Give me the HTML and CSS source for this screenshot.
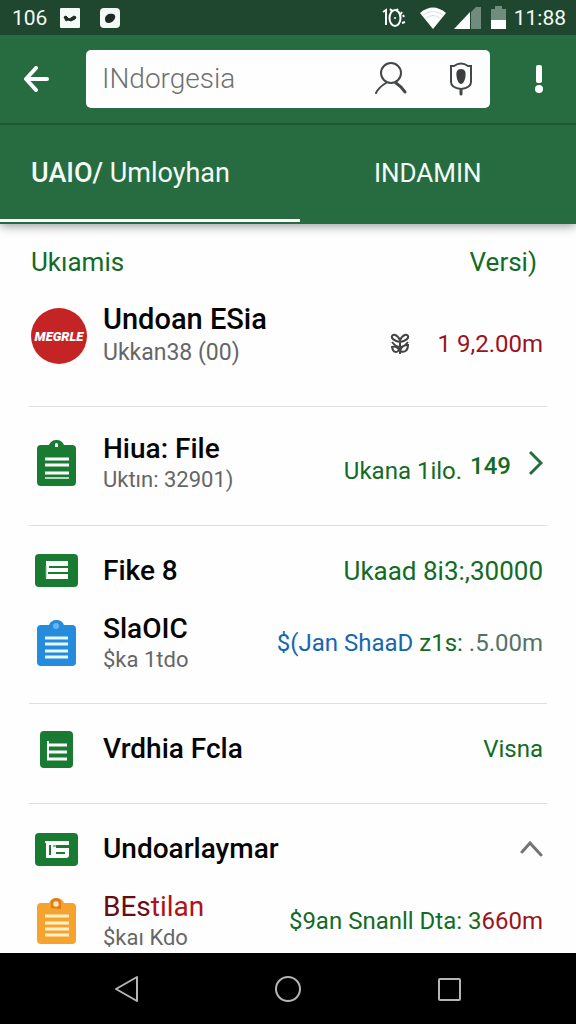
FILE: index.html
```html
<!DOCTYPE html>
<html lang="id">
<head>
<meta charset="utf-8">
<meta name="viewport" content="width=device-width, initial-scale=1">
<title>INdorgesia</title>
<link rel="stylesheet" href="styles.css">
</head>
<body>
<svg class="defs" aria-hidden="true">
  <symbol id="clipboard" viewBox="0 0 56 56">
    <path fill="currentColor" d="M10 10h8c1-3 3.500-5 7.500-5s6.500 2 7.500 5h8a4 4 0 0 1 4 4v33a4 4 0 0 1-4 4H10a4 4 0 0 1-4-4V14a4 4 0 0 1 4-4z"/>
  </symbol>
</svg>

<header class="header">
  <div class="status">
    <span>106</span>
    <svg class="status-app" width="22" height="22" viewBox="0 0 22 22"><rect x="1" y="1" width="20" height="20" rx="1" fill="#f4faf6"/><path d="M5 10l2-1 3 3 2-1 3-2 2 1-1 2-4 2-3-1-2 1z" fill="#1c2b23" stroke="#1c2b23"/></svg>
    <svg width="22" height="22" viewBox="0 0 22 22"><rect x="1" y="1" width="20" height="20" rx="4" fill="#f4faf6"/><path d="M6 12c0-4 4-6 8-5 4 1 2 6-1 8-4 2-7 1-7-3z" fill="#1c2b23"/></svg>
    <svg class="status-alarm" width="26" height="24" viewBox="0 0 26 24" fill="none" stroke="#fff" stroke-width="2"><path d="M1 6l3-2v15M20 6l-2 3M21 9l1 2M20 17l3-1M8 3l2 2M16 3l-2 2"/><ellipse cx="13" cy="12" rx="5.500" ry="8"/><circle cx="13" cy="12" r="1" fill="#fff" stroke="none"/></svg>
    <svg class="status-wifi" width="26" height="22" viewBox="0 0 26 22"><path d="M0 6Q13-5 26 6L13 22z" fill="#fff"/><path d="M3 8q10-7 20 0M6 11q7-5 14 0" fill="none" stroke="#d6e3db"/></svg>
    <svg class="status-signal" width="27" height="23" viewBox="0 0 27 23"><path d="M17 6l5-5h5v22H17z" fill="#6f8d7c"/><path d="M0 23L16 6v17z" fill="#fff"/></svg>
    <svg class="status-battery" width="15" height="23" viewBox="0 0 15 23"><path d="M0 3h4V0h7v3h4v12H0z" fill="#6f8d7c"/><path d="M0 14h15v9H0z" fill="#fff"/></svg>
    <span>11:88</span>
  </div>

  <div class="toolbar">
    <button class="tool" type="button" aria-label="Back">
      <svg width="26" height="26" viewBox="0 0 26 26" fill="none" stroke="#fff" stroke-width="4" stroke-linecap="round" stroke-linejoin="round"><path d="M12 2L2 13l10 11M3 13h20"/></svg>
    </button>
    <div class="search">
      <input class="search-input" type="text" placeholder="INdorgesia" aria-label="Search">
      <button class="search-button" type="button" aria-label="Account">
        <svg width="34" height="34" viewBox="0 0 34 34" fill="none" stroke="#444748" stroke-width="2" stroke-linecap="round"><circle cx="17" cy="11" r="10"/><path d="M2 31q3-6 10-10"/><path d="M22 21q6 4 9 9" stroke-width="3"/></svg>
      </button>
      <button class="search-button" type="button" aria-label="Voice search">
        <svg width="26" height="34" viewBox="0 0 26 34" fill="none" stroke="#444748" stroke-width="2" stroke-linecap="round"><path d="M3 4h3q7-5 14 0h3v16q0 6-10 7-10-1-10-7z"/><path d="M13 7c4 0 5 3 4.500 7s-2 8-4.500 8-4-4-4.500-8S9 7 13 7z" fill="#3c3f40" stroke="none"/><path d="M13 28v4" stroke-width="3"/></svg>
      </button>
    </div>
    <button class="tool" type="button" aria-label="Menu">
      <svg width="8" height="28" viewBox="0 0 8 28" fill="#fff"><rect x="1" width="6" height="18" rx="2"/><circle cx="4" cy="24" r="4"/></svg>
    </button>
  </div>

  <nav class="tabs">
    <a class="tab tab-active" href="#first"><span class="tab-strong">UAIO/</span> Umloyhan</a>
    <a class="tab" href="#second">INDAMIN</a>
  </nav>
</header>

<main class="list" id="first">
  <section class="group group-first">
    <div class="subheader"><span>Ukıamis</span><span>Versi)</span></div>
    <div class="row row-tall">
      <span class="logo">MEGRLE</span>
      <div class="label label-large"><h2 class="title">Undoan ESia</h2><p class="note">Ukkan38 (00)</p></div>
      <svg class="sprout low" width="20" height="38" viewBox="0 0 20 22" fill="none" stroke="#444" stroke-width="2"><path d="M10 9C4 8 1 5 2 3s5-2 8 4c3-6 7-6 8-4s-2 5-8 6zM2 9q4 5 8 5t8-5M10 9v12M2 14c3-1 6 0 7 3-2 3-6 3-7-3zM18 12c-4 0-7 2-8 6 4 2 8 0 8-6z"/></svg>
      <span class="value low red">1 9,2.00m</span>
    </div>
  </section>

  <section class="group group-single">
    <div class="row row-tall">
      <svg class="icon green-icon" viewBox="0 0 56 56"><use href="#clipboard"/><path d="M24 12V9q1-2 3 0v3z" fill="#fff"/><path d="M14 24h24M14 30h24M14 38h24" stroke="#fff" stroke-width="3"/><path d="M14 43h24" stroke="#b9d8c0" stroke-width="2"/></svg>
      <div class="label"><h2 class="title">Hiua: File</h2><p class="note">Uktın: 32901)</p></div>
      <span class="value low">Ukana 1ilo.</span>
      <span class="value medium">149</span>
      <button class="chevron chevron-next" type="button" aria-label="Open">
        <svg width="14" height="26" viewBox="0 0 14 26" fill="none" stroke="#296b41" stroke-width="3"><path d="M1 2l11 11L1 24"/></svg>
      </button>
    </div>
  </section>

  <section class="group">
    <div class="row">
      <svg class="icon green-icon" viewBox="0 0 56 56"><rect x="4" y="11" width="43" height="33" rx="4" fill="currentColor"/><path d="M15 18h22v18H15z" fill="#fff"/><path d="M18 24h20M17 30h21" stroke="currentColor" stroke-width="2"/><path d="M15 23v12" stroke="#75b286"/></svg>
      <div class="label"><h2 class="title">Fike 8</h2></div>
      <span class="value value-large">Ukaad 8i3:,30000</span>
    </div>
    <div class="row row-tall">
      <svg class="icon blue-icon" viewBox="0 0 56 56"><use href="#clipboard"/><circle cx="25" cy="11" r="3" fill="#62b8f2"/><path d="M14 23h23M14 29h23M14 36h23M14 42h23" stroke="#e6f8fa" stroke-width="3"/></svg>
      <div class="label"><h2 class="title">SlaOIC</h2><p class="note">$ka 1tdo</p></div>
      <span class="value"><span class="blue">$(Jan ShaaD</span> z1s: <span class="gray">.5.00m</span></span>
    </div>
  </section>

  <section class="group">
    <div class="row">
      <svg class="icon green-icon" viewBox="0 0 56 56"><rect x="9" y="10" width="33" height="37" rx="4" fill="currentColor"/><path d="M16 24h20M16 31h20M16 38h20" fill="none" stroke="#fff" stroke-width="3"/><path d="M17 20v18" stroke="#fff" stroke-width="2"/></svg>
      <div class="label"><h2 class="title">Vrdhia Fcla</h2></div>
      <span class="value">Visna</span>
    </div>
  </section>

  <section class="group">
    <div class="row">
      <svg class="icon green-icon" viewBox="0 0 56 56"><rect x="4" y="12" width="43" height="33" rx="4" fill="currentColor"/><path d="M14 20h24v4H25v3h13v7q0 3-3 3H15V22h-1z" fill="#fff"/><path d="M19 24v10M25 32h9" stroke="currentColor" stroke-width="2"/><path d="M22 25h3" stroke="currentColor"/></svg>
      <div class="label"><h2 class="title">Undoarlaymar</h2></div>
      <button class="chevron" type="button" aria-label="Collapse">
        <svg width="24" height="18" viewBox="0 0 24 18" fill="none" stroke="#747474" stroke-width="3" stroke-linecap="round"><path d="M3 12l8-9 11 12"/></svg>
      </button>
    </div>
    <div class="row row-tall">
      <svg class="icon orange-icon" viewBox="0 0 56 56"><use href="#clipboard"/><path d="M20 15V8q5-6 10 0v8z" fill="#d87820"/><circle cx="25" cy="11" r="3" fill="#ffe7b5" stroke="#f6aa40"/><path d="M14 23h24M14 30h24M14 36h24M14 42h24" stroke="#fff1c9" stroke-width="3"/></svg>
      <div class="label"><h2 class="title title-red"><span class="maroon">BEs</span>tilan</h2><p class="note">$kaı Kdo</p></div>
      <span class="value">$9an Snanll Dta: 3<span class="red">660m</span></span>
    </div>
  </section>
</main>

<footer class="navbar">
  <button class="nav-button" type="button" aria-label="Back"><svg width="26" height="28" viewBox="0 0 26 28"><path d="M2 14L23 2v24z"/></svg></button>
  <button class="nav-button" type="button" aria-label="Home"><svg width="28" height="28" viewBox="0 0 28 28"><circle cx="14" cy="14" r="12"/></svg></button>
  <button class="nav-button" type="button" aria-label="Recent apps"><svg width="26" height="26" viewBox="0 0 26 26"><rect x="3" y="3" width="21" height="21" rx="1"/></svg></button>
</footer>
</body>
</html>
```

FILE: styles.css
```css
* { box-sizing: border-box; }

body {
  margin: 0;
  height: 100vh;
  display: flex;
  flex-direction: column;
  background: #fefefe;
  color: #050505;
  font-family: Roboto, "Liberation Sans", sans-serif;
}

button {
  display: flex;
  align-items: center;
  justify-content: center;
  padding: 0;
  border: 0;
  background: none;
}

svg { flex: none; }
.defs { position: absolute; width: 0; height: 0; }

.header {
  flex: none;
  position: relative;
  background: #276c41;
  color: #f2fbf5;
  box-shadow: 0 2px 10px rgba(0, 0, 0, 0.4);
}

.status {
  display: flex;
  align-items: center;
  height: 35px;
  padding: 0 10px 0 12px;
  background: #1f4730;
  font-size: 21px;
}

.status-app { margin: 0 18px 0 12px; }
.status-alarm { margin-left: auto; }
.status-wifi { margin: 0 8px 0 12px; }
.status-battery { margin: 0 8px 0 10px; }

.toolbar {
  display: flex;
  align-items: center;
  height: 90px;
  border-bottom: 2px solid #1f5634;
}

.tool { flex: none; width: 86px; height: 56px; }
.tool:first-child { padding-right: 12px; }
.tool:last-child { padding-left: 12px; }

.search {
  flex: 1;
  display: flex;
  align-items: center;
  gap: 36px;
  min-width: 0;
  height: 58px;
  padding: 0 16px;
  border-radius: 5px;
  background: #fefefe;
}

.search-input {
  flex: 1;
  min-width: 0;
  padding: 0;
  border: 0;
  outline: 0;
  background: none;
  color: #707070;
  font: 300 28px/40px Roboto, "Liberation Sans", sans-serif;
}

.search-input::placeholder { color: #707070; opacity: 1; }
.search-button { width: 42px; height: 42px; }
.search-button:last-child { width: 26px; }

.tabs { display: flex; height: 99px; }

.tab {
  flex: 1;
  margin-bottom: 2px;
  padding: 31px 20px 0 0;
  border-bottom: 3px solid transparent;
  color: inherit;
  font-size: 26px;
  line-height: 34px;
  text-align: center;
  text-decoration: none;
}

.tab-active {
  flex: 0 0 auto;
  width: 52%;
  padding-left: 31px;
  border-color: #fff;
  font-size: 27px;
  text-align: left;
}

.tab-strong { font-weight: 500; }

.list {
  flex: 1;
  min-height: 0;
  overflow: hidden auto;
  scrollbar-width: none;
  padding: 0 29px;
}

.group {
  padding: 15px 4px 24px 2px;
  border-bottom: 1px solid #dddee2;
}

.group-first { padding-top: 0; padding-bottom: 34px; }
.group-single { padding-top: 20px; padding-bottom: 26px; }
.group:last-child { border: 0; padding-bottom: 0; }

.subheader {
  display: flex;
  align-items: center;
  justify-content: space-between;
  height: 76px;
  padding-right: 6px;
  color: #126b25;
  font-size: 26px;
}

.row { display: flex; align-items: center; min-height: 60px; }
.row-tall { min-height: 72px; }
.row + .row { margin-top: 6px; }

.icon, .logo { flex: none; width: 56px; height: 56px; margin-right: 16px; }

.logo {
  display: flex;
  align-items: center;
  justify-content: center;
  border-radius: 50%;
  background: #c42424;
  color: #fff;
  font-size: 13px;
  font-style: italic;
  font-weight: 900;
}

.green-icon { color: #197b32; }
.blue-icon { color: #258bdc; }
.orange-icon { color: #f6a22f; }

.label { flex: 1; min-width: 0; white-space: nowrap; }
.title, .note { margin: 0; }
.title { font-size: 28px; font-weight: 500; line-height: 34px; }
.note { color: #666; font-size: 22px; font-weight: 400; line-height: 28px; }
.label-large .title { font-size: 29px; }
.label-large .note { font-size: 23px; line-height: 34px; }
.title-red { color: #af1218; font-weight: 400; }
.maroon { color: #690c10; }

.value { color: #126b25; font-size: 24px; line-height: 32px; white-space: nowrap; }
.value-large { font-size: 26px; }
.low { padding-top: 16px; }
.medium { padding-top: 6px; margin-left: 8px; font-weight: 500; }
.red { color: #9b1220; }
.blue { color: #1568b0; }
.gray { color: #56716a; }
.sprout { margin-right: 28px; }
.chevron { flex: none; height: 44px; }
.chevron-next { margin-left: 18px; }

.navbar {
  flex: none;
  display: flex;
  height: 71px;
  padding: 0 46px;
  background: #000;
}

.nav-button { flex: 1; }
.nav-button svg { fill: none; stroke: #b5b5b5; stroke-width: 2; stroke-linejoin: round; }
```
